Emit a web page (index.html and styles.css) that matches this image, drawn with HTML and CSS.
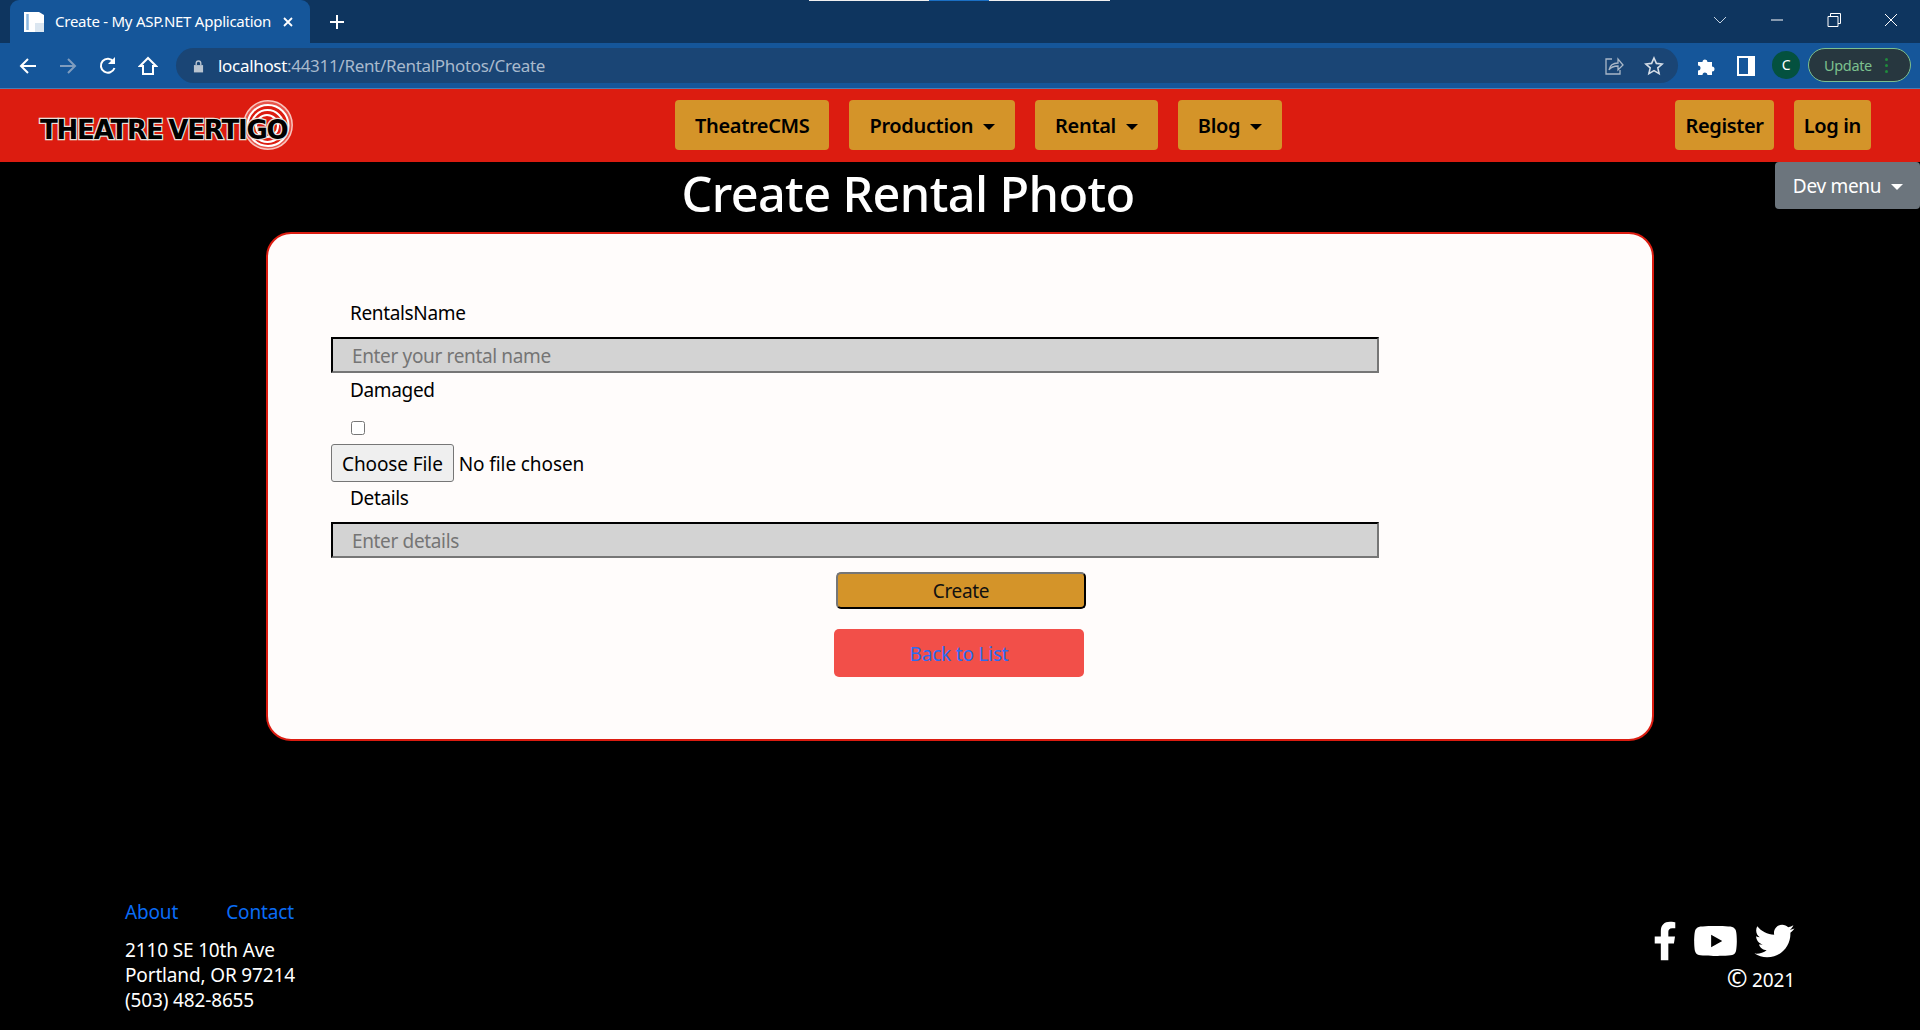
FILE: index.html
```html
<!DOCTYPE html>
<html lang="en">
<head>
<meta charset="utf-8">
<title>Create - My ASP.NET Application</title>
<link rel="stylesheet" href="styles.css">
</head>
<body>
<div class="capture-line"><span class="capture-blue"></span></div>
<header class="browser">
  <div class="tabstrip">
    <div class="tab">
      <svg class="favicon" viewBox="0 0 20 20"><path d="M0 0h15l5 3v17H0z" fill="#fff"/><path d="M3.500 2v16" stroke="#8db8e0" stroke-width="2.500"/><path d="M11 11h9v9h-9z" fill="#dbe6f0"/></svg>
      <span class="tab-title">Create - My ASP.NET Application</span>
      <svg class="tab-close" viewBox="0 0 12 12"><path d="M2 2l8 8M10 2l-8 8" stroke="#fff" stroke-width="1.8"/></svg>
    </div>
    <svg class="new-tab" viewBox="0 0 16 16"><path d="M8 1v14M1 8h14" stroke="#fff" stroke-width="2"/></svg>
    <div class="window-controls">
      <svg class="wc" viewBox="0 0 16 16"><path d="M2 5l6 6 6-6" stroke="#c5d3e2" fill="none"/></svg>
      <svg class="wc" viewBox="0 0 16 16"><path d="M2 8h12" stroke="#fff" fill="none"/></svg>
      <svg class="wc" viewBox="0 0 16 16"><path d="M2 4.500h10v10H2zM4.500 4V1.500h10v10H12" stroke="#fff" fill="none"/></svg>
      <svg class="wc" viewBox="0 0 16 16"><path d="M2 2l12 12M14 2L2 14" stroke="#fff" fill="none"/></svg>
    </div>
  </div>
  <div class="toolbar">
    <svg class="tb-icon" viewBox="0 0 20 20"><path d="M18 10H3M10 3l-7 7 7 7" stroke="#fff" stroke-width="2" fill="none"/></svg>
    <svg class="tb-icon" viewBox="0 0 20 20"><path d="M2 10h15M10 3l7 7-7 7" stroke="#7f9dbf" stroke-width="2" fill="none"/></svg>
    <svg class="tb-icon" viewBox="0 0 20 20"><path d="M16.500 12a7 7 0 1 1-1-6.500" stroke="#fff" stroke-width="2" fill="none"/><path d="M17 1v7h-7z" fill="#fff"/></svg>
    <svg class="tb-icon" viewBox="0 0 20 20"><path d="M10 2L2 10h3v8h10v-8h3z" stroke="#fff" stroke-width="2" fill="none"/></svg>
    <div class="omnibox">
      <svg class="lock" viewBox="0 0 12 14"><path d="M1 6h10v8H1z" fill="#b9c4d0"/><path d="M3.500 6V4a2.500 2.500 0 0 1 5 0v2" stroke="#b9c4d0" stroke-width="1.500" fill="none"/></svg>
      <span class="url"><span class="url-host">localhost</span>:44311/Rent/RentalPhotos/Create</span>
      <svg class="omni-share" viewBox="0 0 20 20"><path d="M8 3H2v15h14v-4" stroke="#a9b7c7" fill="none" stroke-width="1.300"/><path d="M5 14c1-5 5-7 9-7V3l5 6-5 5v-4c-3 0-7 1-9 4z" stroke="#a9b7c7" fill="none" stroke-width="1.300"/></svg>
      <svg class="omni-star" viewBox="0 0 20 20"><path d="M10 2l2.400 5.400 5.800.6-4.400 3.900 1.300 5.700L10 14.600 4.900 17.600l1.300-5.700L1.800 8l5.800-.6z" stroke="#d6dee7" fill="none" stroke-width="1.600"/></svg>
    </div>
    <svg class="puzzle" viewBox="0 0 20 20"><path d="M2 6h4.500a2.500 2.500 0 0 1 5 0H16v4.500a2.500 2.500 0 0 1 0 5V19h-4.500a2.500 2.500 0 0 0-5 0H2v-4.500a2.500 2.500 0 0 0 0-5z" fill="#fff"/></svg>
    <svg class="panel" viewBox="0 0 18 20"><path d="M0 0h18v20H0z" fill="#fff"/><path d="M2 2h9v16H2z" fill="#15569a"/></svg>
    <span class="avatar">C</span>
    <span class="update">Update<span class="update-dots"><i></i><i></i><i></i></span></span>
  </div>
</header>

<nav class="navbar">
  <a class="logo" href="#">
    <svg class="logo-rings" viewBox="0 0 50 50">
      <circle cx="25" cy="25" r="24.200" fill="#e8544a" stroke="#f9c4bd" stroke-width="1.500"/>
      <circle cx="25" cy="25.500" r="20.500" fill="#dc1c10" stroke="#fff" stroke-width="2"/>
      <circle cx="24.500" cy="26" r="16" fill="none" stroke="#fff" stroke-width="2"/>
      <circle cx="24" cy="26" r="11" fill="none" stroke="#fff" stroke-width="2"/>
    </svg>
    <span class="logo-text">THEATRE VERTIGO</span>
  </a>
  <ul class="nav-main">
    <li><a class="nav-btn" href="#">TheatreCMS</a></li>
    <li><a class="nav-btn caret" href="#">Production</a></li>
    <li><a class="nav-btn caret" href="#">Rental</a></li>
    <li><a class="nav-btn caret" href="#">Blog</a></li>
  </ul>
  <ul class="nav-right">
    <li><a class="nav-btn nav-btn-tight" href="#">Register</a></li>
    <li><a class="nav-btn nav-btn-tight" href="#">Log in</a></li>
  </ul>
</nav>

<button class="dev-menu caret" type="button">Dev menu</button>

<main class="content">
  <h1 class="page-title">Create Rental Photo</h1>
  <section class="card">
    <form class="form">
      <label class="field-label first" for="rn">RentalsName</label>
      <input class="text-input" id="rn" type="text" placeholder="Enter your rental name">
      <label class="field-label" for="dm">Damaged</label>
      <input class="check" id="dm" type="checkbox">
      <input class="file" type="file">
      <label class="field-label details" for="dt">Details</label>
      <input class="text-input" id="dt" type="text" placeholder="Enter details">
    </form>
    <div class="actions">
      <button class="create" type="button">Create</button>
      <a class="back" href="#">Back to List</a>
    </div>
  </section>
</main>

<footer class="footer">
  <div class="footer-left">
    <div class="footer-links"><a href="#">About</a><a href="#">Contact</a></div>
    <address class="address">2110 SE 10th Ave<br>Portland, OR 97214<br>(503) 482-8655</address>
  </div>
  <div class="footer-right">
    <div class="social">
      <svg class="fb" viewBox="0 0 320 512"><path fill="#fff" d="M279.14 288l14.22-92.66h-88.91v-60.13c0-25.35 12.42-50.06 52.24-50.06h40.42V6.26S260.43 0 225.36 0c-73.22 0-121.08 44.38-121.08 124.72v70.62H22.89V288h81.39v224h100.17V288z"/></svg>
      <svg class="yt" viewBox="0 0 576 512"><path fill="#fff" d="M549.655 124.083c-6.281-23.65-24.787-42.276-48.284-48.597C458.781 64 288 64 288 64S117.22 64 74.629 75.486c-23.497 6.322-42.003 24.947-48.284 48.597-11.412 42.867-11.412 132.305-11.412 132.305s0 89.438 11.412 132.305c6.281 23.65 24.787 41.5 48.284 47.821C117.22 448 288 448 288 448s170.78 0 213.371-11.486c23.497-6.321 42.003-24.171 48.284-47.821 11.412-42.867 11.412-132.305 11.412-132.305s0-89.438-11.412-132.305zm-317.51 213.508V175.185l142.739 81.205-142.739 81.201z"/></svg>
      <svg class="tw" viewBox="0 0 512 512"><path fill="#fff" d="M459.37 151.716c.325 4.548.325 9.097.325 13.645 0 138.72-105.583 298.558-298.558 298.558-59.452 0-114.68-17.219-161.137-47.106 8.447.974 16.568 1.299 25.34 1.299 49.055 0 94.213-16.568 130.274-44.832-46.132-.975-84.792-31.188-98.112-72.772 6.498.974 12.995 1.624 19.818 1.624 9.421 0 18.843-1.3 27.614-3.573-48.081-9.747-84.143-51.98-84.143-102.985v-1.299c13.969 7.797 30.214 12.67 47.431 13.319-28.264-18.843-46.781-51.005-46.781-87.391 0-19.492 5.197-37.36 14.294-52.954 51.655 63.675 129.3 105.258 216.365 109.807-1.624-7.797-2.599-15.918-2.599-24.04 0-57.828 46.782-104.934 104.934-104.934 30.213 0 57.502 12.67 76.67 33.137 23.715-4.548 46.456-13.32 66.599-25.34-7.798 24.366-24.366 44.833-46.132 57.827 21.117-2.273 41.584-8.122 60.426-16.243-14.292 20.791-32.161 39.308-52.628 54.253z"/></svg>
    </div>
    <div class="copyright"><span class="copy-mark">©</span> 2021</div>
  </div>
</footer>
</body>
</html>
```

FILE: styles.css
```css
* { box-sizing: border-box; }
html, body { margin: 0; padding: 0; }
body {
  height: 1030px;
  overflow: hidden;
  display: flex;
  flex-direction: column;
  position: relative;
  background: #000;
  color: #000;
  font-family: "Noto Sans", "Open Sans", sans-serif;
  font-size: 19px;
  letter-spacing: -0.35px;
}
a { text-decoration: none; }
ul { list-style: none; margin: 0; padding: 0; }

.capture-line { position: absolute; top: 0; left: 809px; width: 301px; height: 1px; background: #f0f0f0; z-index: 2; }
.capture-blue { display: block; width: 60px; height: 1px; margin-left: 120px; background: #1a6fc4; }

.browser { flex: none; color: #fff; }
.tabstrip { height: 43px; display: flex; align-items: center; padding-left: 10px; background: #0e355f; }
.tab { width: 300px; height: 43px; display: flex; align-items: center; padding: 0 16px 0 14px; background: #15569a; border-radius: 9px 9px 0 0; }
.favicon { width: 20px; height: 20px; margin-right: 11px; }
.tab-title { flex: 1; padding-bottom: 2px; font-size: 15px; letter-spacing: -0.25px; white-space: nowrap; }
.tab-close { width: 12px; height: 12px; }
.new-tab { width: 16px; height: 16px; margin-left: 19px; }
.window-controls { margin-left: auto; display: flex; gap: 41px; padding: 0 21px 4px 0; }
.wc { width: 16px; height: 16px; }

.toolbar { height: 46px; display: flex; align-items: flex-start; padding: 5px 0 0 18px; background: #15569a; border-bottom: 1px solid #4a7db3; }
.tb-icon { width: 20px; height: 20px; margin: 8px 20px 0 0; }
.tb-icon:nth-child(4) { margin-right: 18px; }
.omnibox { width: 1502px; height: 35px; display: flex; align-items: center; padding: 0 13px 0 17px; background: #1a4575; border-radius: 18px; }
.lock { width: 11px; height: 14px; margin-right: 14px; }
.url { flex: 1; font-size: 17px; letter-spacing: -0.31px; color: #a9bacd; white-space: nowrap; }
.url-host { color: #fff; }
.omni-share { width: 20px; height: 20px; margin-right: 20px; }
.omni-star { width: 20px; height: 20px; margin-right: 1px; }
.puzzle { width: 20px; height: 20px; margin: 8px 0 0 18px; }
.panel { width: 18px; height: 20px; margin: 8px 0 0 21px; }
.avatar { width: 28px; height: 28px; margin: 3px 0 0 17px; border-radius: 50%; background: #04513f; color: #fff; font-size: 14px; line-height: 28px; text-align: center; }
.update { width: 103px; height: 34px; margin-left: 8px; display: flex; align-items: center; padding-left: 15px; background: #27373f; border: 1px solid #7cc08e; border-radius: 17px; color: #7cc08e; font-size: 14.500px; }
.update-dots { display: flex; flex-direction: column; gap: 3px; margin-left: 13px; }
.update-dots i { width: 3px; height: 3px; border-radius: 50%; background: #1f8b3c; }

.navbar { flex: none; height: 73px; padding-bottom: 1px; display: flex; align-items: center; background: #dc1c10; }
.logo { position: relative; width: 253px; height: 50px; margin-left: 40px; padding-top: 10px; display: flex; align-items: center; }
.logo-rings { position: absolute; top: 0; right: 0; width: 50px; height: 50px; }
.logo-text { position: relative; font-family: "DejaVu Sans", sans-serif; font-weight: 700; font-size: 26px; letter-spacing: -1.2px; word-spacing: -2px; color: #000; white-space: nowrap; -webkit-text-stroke: 2.500px #e8e0dc; paint-order: stroke fill; }
.nav-main { display: flex; gap: 20px; margin-left: 382px; }
.nav-right { display: flex; gap: 20px; margin-left: auto; padding-right: 49px; }
.nav-btn { display: block; height: 50px; padding: 0 20px; background: #d49429; border-radius: 4px; color: #000; font-weight: 600; font-size: 20px; line-height: 52px; letter-spacing: -0.35px; }
.nav-btn-tight { padding: 0 10px; }
.caret::after { content: ""; display: inline-block; margin-left: 10px; vertical-align: 3px; border-top: 6px solid currentColor; border-left: 6px solid transparent; border-right: 6px solid transparent; }

.dev-menu { position: absolute; top: 162px; right: 0; width: 145px; height: 47px; padding: 0 0 0 1px; border: 0; border-radius: 4px; background: #6c757d; color: #fff; font: inherit; font-size: 19px; letter-spacing: -0.3px; }

.content { flex: none; display: flex; flex-direction: column; align-items: center; }
.page-title { width: 100%; height: 70px; margin: 0; padding-right: 104px; color: #fff; font-size: 48.600px; font-weight: 500; line-height: 63px; text-align: center; letter-spacing: -0.6px; }
.card { width: 1388px; height: 509px; padding: 0 63px; background: #fffcfb; border: 2px solid #dc1c10; border-radius: 25px; }
.form { display: flex; flex-direction: column; align-items: flex-start; width: 1048px; }
.field-label { display: block; height: 28px; padding-left: 19px; line-height: 28px; }
.field-label.first { margin-top: 64px; margin-bottom: 11px; line-height: 30px; }
.text-input { width: 1048px; height: 36px; padding: 2px 19px 0; font: inherit; letter-spacing: inherit; background: #d3d3d3; border: 2px inset #767676; border-color: #222 #767676 #767676 #222; }
.text-input::placeholder { color: #757575; opacity: 1; }
.field-label:not(.first) { margin-top: 3px; }
.check { width: 14px; height: 14px; margin: 17px 0 9px 20px; }
.file { width: 400px; height: 38px; font: inherit; letter-spacing: -0.1px; }
.file::file-selector-button { height: 38px; padding: 1px 10px 0; margin-right: 5px; font: inherit; letter-spacing: -0.1px; background: #efefef; border: 1px solid #767676; border-radius: 3px; }
.field-label.details { margin-top: 1px; margin-bottom: 11px; line-height: 30px; }
.actions { display: flex; flex-direction: column; align-items: center; margin-top: 14px; }
.create { width: 250px; height: 37px; margin-left: 2px; padding: 0; font: inherit; letter-spacing: inherit; color: #111; background: #d49429; border: 2px outset #767676; border-color: #767676 #222 #222 #767676; border-radius: 5px; }
.back { width: 250px; height: 48px; margin: 20px 2px 0 0; background: #f24f49; border-radius: 5px; color: #2b6cf0; line-height: 50px; text-align: center; letter-spacing: -0.2px; }

.footer { flex: 1; display: flex; justify-content: space-between; align-items: flex-start; padding: 0 125px; color: #fff; letter-spacing: -0.15px; }
.footer-left { margin-top: 157px; }
.footer-links { display: flex; gap: 48px; line-height: 28px; }
.footer-links a { color: #0a6cf5; }
.address { margin-top: 12px; font-style: normal; line-height: 25px; }
.footer-right { margin-top: 180px; display: flex; flex-direction: column; align-items: flex-end; }
.social { display: flex; align-items: center; gap: 16px; height: 40px; }
.fb { width: 24px; height: 40px; }
.yt { width: 45px; height: 40px; }
.tw { width: 41px; height: 40px; }
.copyright { margin-top: 6px; line-height: 24px; }
.copy-mark { font-size: 25px; line-height: 20px; }
```
